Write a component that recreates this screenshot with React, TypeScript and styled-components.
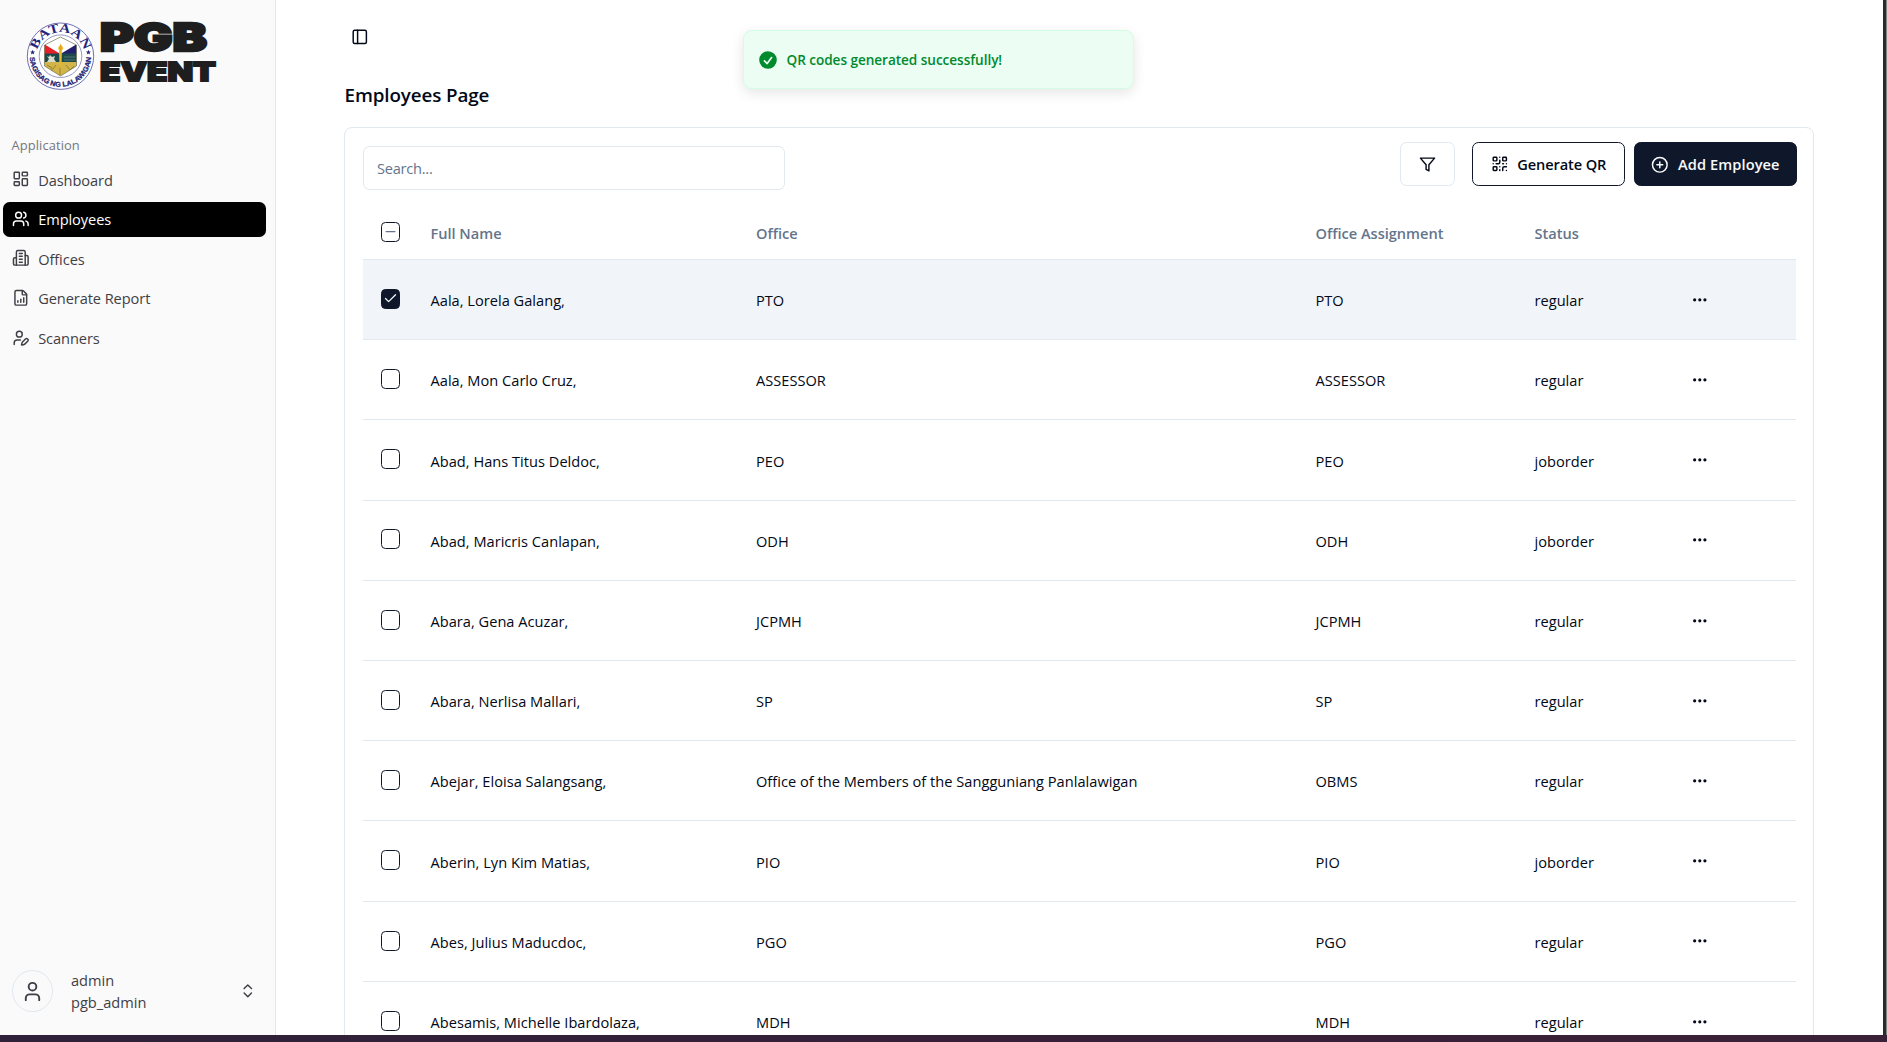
import React from 'react';
import styled, { createGlobalStyle } from 'styled-components';
import {
  LayoutDashboard, Users, FileChartColumnIncreasing, UserPen, User,
  ChevronsUpDown, PanelLeft, QrCode, CirclePlus, Ellipsis, Check, Minus,
} from 'lucide-react';

const colors = {
  ink: '#020817',
  muted: '#64748b',
  line: '#e2e8f0',
  primary: '#0f172a',
  side: '#fafafa',
  sideText: '#3f3f46',
};

const GlobalStyle = createGlobalStyle`
  *, *::before, *::after { box-sizing: border-box; }
  body {
    margin: 0;
    overflow: hidden;
    background: #fff;
    color: ${colors.ink};
    font-family: 'Segoe UI', 'Open Sans', 'Noto Sans', sans-serif;
  }
  button, input { font: inherit; color: inherit; }
`;

const Screen = styled.div`
  display: grid;
  grid-template-columns: 276px minmax(0, 1fr) 4px;
  grid-template-rows: minmax(0, 1fr) 7px;
  height: 1042px;
`;

const Sidebar = styled.aside`
  display: flex;
  flex-direction: column;
  background: ${colors.side};
  border-right: 1px solid ${colors.line};
  color: ${colors.sideText};
`;

const LogoBox = styled.div`
  padding-left: 22px;
  height: 127px;
  flex: none;
  svg { display: block; }
`;

const GroupLabel = styled.div`
  height: 35px;
  padding-left: 11.5px;
  line-height: 37px;
  font-size: 12.9px;
  letter-spacing: 0.1px;
  font-weight: 500;
  color: #76767b;
`;

const Nav = styled.nav`
  display: flex;
  flex-direction: column;
  gap: 4.4px;
  padding: 0 9px 0 3px;
`;

const NavItem = styled.a<{ $active?: boolean }>`
  display: flex;
  align-items: center;
  gap: 9px;
  height: 35.2px;
  padding-left: 8.6px;
  border-radius: 6.6px;
  background: ${(p) => (p.$active ? '#000' : 'transparent')};
  color: ${(p) => (p.$active ? '#fff' : 'inherit')};
  font-size: 14.6px;
  letter-spacing: -0.08px;
  svg { flex: none; margin-top: -1px; }
`;

const Account = styled.div`
  display: flex;
  align-items: center;
  margin-top: auto;
  height: 88px;
  padding: 0 18px 0 12px;
`;

const Avatar = styled.div`
  display: grid;
  place-items: center;
  width: 41px;
  height: 42px;
  border: 1px solid ${colors.line};
  border-radius: 50%;
  svg { margin-left: -1px; }
`;

const AccountText = styled.div`
  flex: 1;
  padding-left: 18px;
  font-size: 14.6px;
  line-height: 22px;
`;

const Main = styled.main`
  display: flex;
  flex-direction: column;
  overflow: hidden;
  padding: 0 69px 0 68px;
`;

const TopBar = styled.header`
  display: flex;
  flex: none;
  align-items: center;
  height: 74px;
  padding-left: 7px;
`;

const Title = styled.h1`
  margin: 0;
  flex: none;
  height: 53px;
  padding: 7px 0 0 0.5px;
  font-size: 18.8px;
  line-height: 28px;
  font-weight: 600;
  letter-spacing: -0.1px;
`;

const Card = styled.section`
  height: 1100px;
  flex: none;
  border: 1px solid ${colors.line};
  border-radius: 8px;
  padding: 14px 16px 0 18px;
`;

const Toolbar = styled.div`
  display: flex;
  align-items: flex-start;
  height: 64.4px;
`;

const Search = styled.input`
  width: 422px;
  height: 44px;
  margin: 4px auto 0 0;
  padding: 0 13px;
  border: 1px solid ${colors.line};
  border-radius: 6.6px;
  background: #fff;
  font-size: 14.6px;
  letter-spacing: -0.25px;
  &::placeholder { color: ${colors.muted}; opacity: 1; }
`;

const Button = styled.button<{ $kind: 'ghost' | 'outline' | 'solid'; $width: number }>`
  display: flex;
  align-items: center;
  justify-content: center;
  gap: 9px;
  width: ${(p) => p.$width}px;
  height: 44px;
  padding: 0;
  border: 1px solid ${(p) => (p.$kind === 'ghost' ? colors.line : colors.primary)};
  border-radius: 6.6px;
  background: ${(p) => (p.$kind === 'solid' ? colors.primary : '#fff')};
  color: ${(p) => (p.$kind === 'solid' ? '#f8fafc' : colors.ink)};
  margin-left: ${(p) => (p.$kind === 'outline' ? 17 : p.$kind === 'solid' ? 9 : 0)}px;
  font-size: 14.6px;
  font-weight: 600;
  letter-spacing: ${(p) => (p.$kind === 'solid' ? 0.1 : -0.12)}px;
  svg { position: relative; top: ${(p) => (p.$kind === 'solid' ? 1 : 0)}px; }
`;

const Row = styled.div<{ $selected?: boolean; $head?: boolean }>`
  display: grid;
  grid-template-columns: 67.5px 325.5px 559.5px 219px 156.5px 1fr;
  align-items: center;
  width: 1433px;
  height: ${(p) => (p.$head ? 53.5 : 80.22)}px;
  border-bottom: 1px solid ${colors.line};
  background: ${(p) => (p.$selected ? '#f1f5f9' : 'transparent')};
  color: ${(p) => (p.$head ? colors.muted : colors.ink)};
  font-size: 14.6px;
  font-weight: ${(p) => (p.$head ? 600 : 400)};
  letter-spacing: ${(p) => (p.$head ? -0.02 : 0.02)}px;
`;

const Cell = styled.div`
  white-space: nowrap;
  padding-top: 1.2px;
`;

const CheckCell = styled.div`
  padding: 0 0 1.4px 18px;
`;

const Box = styled.div<{ $checked?: boolean }>`
  display: grid;
  place-items: center;
  width: 19px;
  height: 20px;
  border: 1px solid ${colors.primary};
  border-radius: 4.4px;
  background: ${(p) => (p.$checked ? colors.primary : '#fff')};
  color: ${(p) => (p.$checked ? '#f8fafc' : colors.muted)};
`;

const Edge = styled.div`
  background: #2b2b2b;
  border-right: 1px solid #858585;
`;

const Taskbar = styled.div`
  grid-column: 1 / -1;
  background: linear-gradient(90deg, #2e2139, #352038 50%, #3b2138);
`;

const Toast = styled.div`
  position: absolute;
  top: 30px;
  left: 743px;
  display: flex;
  align-items: center;
  gap: 8px;
  width: 391px;
  height: 59px;
  padding-left: 12.5px;
  border: 1px solid #d3fde5;
  border-radius: 8.8px;
  background: #ecfdf3;
  box-shadow: 0 4px 13px rgba(0, 0, 0, 0.1);
  color: #008a2e;
  font-size: 13.6px;
  font-weight: 600;
  letter-spacing: -0.05px;
`;

const employees = [
  ['Aala, Lorela Galang,', 'PTO', 'PTO', 'regular'],
  ['Aala, Mon Carlo Cruz,', 'ASSESSOR', 'ASSESSOR', 'regular'],
  ['Abad, Hans Titus Deldoc,', 'PEO', 'PEO', 'joborder'],
  ['Abad, Maricris Canlapan,', 'ODH', 'ODH', 'joborder'],
  ['Abara, Gena Acuzar,', 'JCPMH', 'JCPMH', 'regular'],
  ['Abara, Nerlisa Mallari,', 'SP', 'SP', 'regular'],
  ['Abejar, Eloisa Salangsang,', 'Office of the Members of the Sangguniang Panlalawigan', 'OBMS', 'regular'],
  ['Aberin, Lyn Kim Matias,', 'PIO', 'PIO', 'joborder'],
  ['Abes, Julius Maducdoc,', 'PGO', 'PGO', 'regular'],
  ['Abesamis, Michelle Ibardolaza,', 'MDH', 'MDH', 'regular'],
];

function OfficeIcon({ size }: { size: number }) {
  return (
    <svg width={size} height={size} viewBox="0 0 24 24" fill="none" stroke="currentColor" strokeWidth="2" strokeLinecap="round" strokeLinejoin="round">
      <path d="M6 22V4a2 2 0 0 1 2-2h8a2 2 0 0 1 2 2v18Z" />
      <path d="M6 12H4a2 2 0 0 0-2 2v6a2 2 0 0 0 2 2h2" />
      <path d="M18 9h2a2 2 0 0 1 2 2v9a2 2 0 0 1-2 2h-2" />
      <path d="M10 6h4M10 10h4M10 14h4M10 18h4" />
    </svg>
  );
}

const navItems = [
  { label: 'Dashboard', Icon: LayoutDashboard },
  { label: 'Employees', Icon: Users, active: true },
  { label: 'Offices', Icon: OfficeIcon },
  { label: 'Generate Report', Icon: FileChartColumnIncreasing },
  { label: 'Scanners', Icon: UserPen },
];

function Logo() {
  return (
    <svg width="210" height="100" viewBox="22 0 210 100">
      <defs>
        <path id="arcTop" d="M36.5 56.2a24 24 0 0 1 48 0" />
        <path id="arcBottom" d="M29.9 56.2a30.6 30.6 0 0 0 61.2 0" />
        <clipPath id="shield"><path d="M60.5 37 76.5 45V66L60.5 76 44.5 66V45Z" /></clipPath>
      </defs>
      <circle cx="60.5" cy="56.2" r="33.2" fill="#fff" stroke="#4a4aa0" strokeWidth="0.8" />
      <circle cx="60.5" cy="56.2" r="21.3" fill="#fff" stroke="#6a6ab0" strokeWidth="0.7" />
      <g clipPath="url(#shield)">
        <rect x="44" y="36" width="33" height="41" fill="#fff" />
        <path d="M44 44 60.5 54H44Z" fill="#e8202a" />
        <path d="M77 44 60.5 54H77Z" fill="#20206e" />
        <rect x="44" y="53.5" width="33" height="9" fill="#1c4a4c" />
        <path d="M47 56l2 1 1-2 2 2 3-1-1 3 2 3h-9l2-3z" fill="#d9dccb" />
        <path d="M64 57h11M64 60h11" stroke="#5c8078" strokeWidth="0.8" />
        <rect x="44" y="62" width="33" height="15" fill="#d1b54a" />
        <path d="M47 65l5 3v4M56 65l-3 4M66 65l4 5 4-4M60 66v9" stroke="#9b822c" strokeWidth="1" fill="none" />
        <path d="M59 50h3l-.6 18h-1.8z" fill="#e8b82c" />
      </g>
      <path d="M60.5 37 76.5 45V66L60.5 76 44.5 66V45Z" fill="none" stroke="#72704f" strokeWidth="0.7" />
      <circle cx="60.7" cy="48" r="2.6" fill="#f3d36a" />
      <path d="M60.7 43.5l1.8 4.8-1.8 3.2-1.8-3.2z" fill="#e2a51c" />
      <text fontFamily="Liberation Serif, serif" fontWeight="700" fontSize="12.6" fill="#25257c">
        <textPath href="#arcTop" startOffset="6.2" textLength="63" lengthAdjust="spacingAndGlyphs">BATAAN</textPath>
      </text>
      <text fontFamily="Liberation Sans, sans-serif" fontWeight="700" fontSize="7" fill="#1b1b72" stroke="#1b1b72" strokeWidth="0.25">
        <textPath href="#arcBottom" startOffset="1" textLength="94" lengthAdjust="spacingAndGlyphs">SAGISAG NG LALAWIGAN</textPath>
      </text>
      <g fill="#25257c">
        <path d="M32.6 49.8l.7 1.7 1.8.1-1.4 1.1.5 1.8-1.6-1-1.6 1 .5-1.8-1.4-1.1 1.8-.1z" />
        <path d="M88.4 49.8l.7 1.7 1.8.1-1.4 1.1.5 1.8-1.6-1-1.6 1 .5-1.8-1.4-1.1 1.8-.1z" />
      </g>
      <g fontFamily="Inter, sans-serif" fontWeight="900" fill="#1e1e1e" stroke="#1e1e1e">
        <text x="100" y="50.6" fontSize="38.4" strokeWidth="2.4" textLength="107" lengthAdjust="spacingAndGlyphs">PGB</text>
        <text x="100" y="80.8" fontSize="26" strokeWidth="1.8" textLength="116" lengthAdjust="spacingAndGlyphs">EVENT</text>
      </g>
    </svg>
  );
}

function FilterIcon() {
  return (
    <svg width="17" height="17" viewBox="0 0 24 24" fill="none" stroke="currentColor" strokeWidth="2" strokeLinecap="round" strokeLinejoin="round">
      <polygon points="22 3 2 3 10 12.46 10 19 14 21 14 12.46 22 3" />
    </svg>
  );
}

function SuccessIcon() {
  return (
    <svg width="22" height="22" viewBox="0 0 20 20" fill="currentColor">
      <path fillRule="evenodd" clipRule="evenodd" d="M10 18a8 8 0 100-16 8 8 0 000 16zm3.857-9.809a.75.75 0 00-1.214-.882l-3.483 4.79-1.88-1.88a.75.75 0 10-1.06 1.061l2.5 2.5a.75.75 0 001.137-.089l4-5.5z" />
    </svg>
  );
}

export default function App() {
  return (
    <>
      <GlobalStyle />
      <Screen>
        <Sidebar>
          <LogoBox><Logo /></LogoBox>
          <GroupLabel>Application</GroupLabel>
          <Nav>
            {navItems.map(({ label, Icon, active }) => (
              <NavItem key={label} $active={active}>
                <Icon size={17.6} />
                {label}
              </NavItem>
            ))}
          </Nav>
          <Account>
            <Avatar><User size={23} /></Avatar>
            <AccountText>
              <div>admin</div>
              <div>pgb_admin</div>
            </AccountText>
            <ChevronsUpDown size={17.6} />
          </Account>
        </Sidebar>
        <Main>
          <TopBar><PanelLeft size={17.6} /></TopBar>
          <Title>Employees Page</Title>
          <Card>
            <Toolbar>
              <Search placeholder="Search..." />
              <Button $kind="ghost" $width={55}><FilterIcon /></Button>
              <Button $kind="outline" $width={153}><QrCode size={17.6} />Generate QR</Button>
              <Button $kind="solid" $width={163}><CirclePlus size={17.6} />Add Employee</Button>
            </Toolbar>
            <Row $head>
              <CheckCell><Box><Minus size={15} /></Box></CheckCell>
              <Cell>Full Name</Cell>
              <Cell>Office</Cell>
              <Cell>Office Assignment</Cell>
              <Cell>Status</Cell>
            </Row>
            {employees.map(([name, office, assignment, status], i) => (
              <Row key={name} $selected={i === 0}>
                <CheckCell><Box $checked={i === 0}>{i === 0 && <Check size={15} />}</Box></CheckCell>
                <Cell>{name}</Cell>
                <Cell>{office}</Cell>
                <Cell>{assignment}</Cell>
                <Cell>{status}</Cell>
                <Ellipsis size={17.6} strokeWidth={2.4} />
              </Row>
            ))}
          </Card>
        </Main>
        <Edge />
        <Taskbar />
      </Screen>
      <Toast><SuccessIcon />QR codes generated successfully!</Toast>
    </>
  );
}
